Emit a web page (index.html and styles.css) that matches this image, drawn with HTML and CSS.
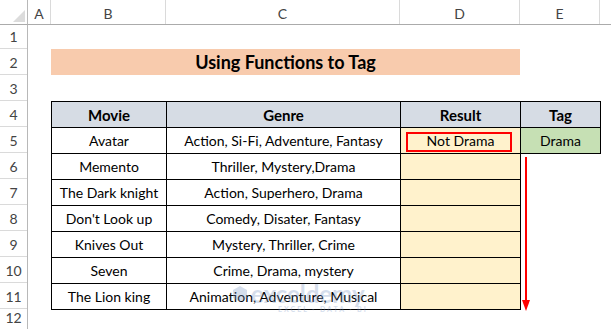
FILE: index.html
```html
<!DOCTYPE html>
<html>
<head>
<meta charset="utf-8">
<link rel="stylesheet" href="styles.css">
</head>
<body>
<div class="sheet">
  <div class="corner"><span class="tri"></span></div>
  <div class="colheads">
    <div class="ch w-a">A</div>
    <div class="ch w-b">B</div>
    <div class="ch w-c">C</div>
    <div class="ch w-d">D</div>
    <div class="ch w-e">E</div>
    <div class="ch w-f"></div>
  </div>
  <div class="rowheads">
    <div class="rh short">1</div>
    <div class="rh">2</div>
    <div class="rh">3</div>
    <div class="rh">4</div>
    <div class="rh">5</div>
    <div class="rh">6</div>
    <div class="rh">7</div>
    <div class="rh">8</div>
    <div class="rh">9</div>
    <div class="rh">10</div>
    <div class="rh">11</div>
    <div class="rh last">12</div>
  </div>
  <div class="content">
    <div class="title">Using Functions to Tag</div>
    <table class="data">
      <colgroup>
        <col class="c-b"><col class="c-c"><col class="c-d"><col class="c-e">
      </colgroup>
      <tr class="head">
        <td class="b">Movie</td><td class="b">Genre</td><td class="b">Result</td><td class="b">Tag</td>
      </tr>
      <tr>
        <td class="b">Avatar</td><td class="b">Action, Si-Fi, Adventure, Fantasy</td>
        <td class="b res"><span class="mark"></span>Not Drama</td><td class="b tag">Drama</td>
      </tr>
      <tr><td class="b">Memento</td><td class="b">Thriller, Mystery,Drama</td><td class="b res"></td><td></td></tr>
      <tr><td class="b">The Dark knight</td><td class="b">Action, Superhero, Drama</td><td class="b res"></td><td></td></tr>
      <tr><td class="b">Don't Look up</td><td class="b">Comedy, Disater, Fantasy</td><td class="b res"></td><td></td></tr>
      <tr><td class="b">Knives Out</td><td class="b">Mystery, Thriller, Crime</td><td class="b res"></td><td></td></tr>
      <tr><td class="b">Seven</td><td class="b">Crime, Drama, mystery</td><td class="b res"></td><td></td></tr>
      <tr><td class="b">The Lion king</td><td class="b">Animation, Adventure, Musical</td><td class="b res"></td><td></td></tr>
    </table>
  </div>
  <svg class="arrow" width="12" height="156" viewBox="0 0 12 156">
    <line x1="6" y1="0" x2="6" y2="146" stroke="#ff0000" stroke-width="2"/>
    <polygon points="2,143 10,143 6,154" fill="#ff0000"/>
  </svg>
  <div class="watermark">
    <div class="wm-row">
      <svg class="wm-logo" width="16" height="18" viewBox="0 0 16 18">
        <path d="M8 1 L15 5 L15 13 L8 17 L1 13 L1 5 Z" fill="#7f9cc7"/>
      </svg>
      <span class="wm-text">exceldemy</span>
    </div>
    <div class="wm-sub">EXCEL · DATA · BI</div>
  </div>
</div>
</body>
</html>
```

FILE: styles.css
```css
* { box-sizing: border-box; }
html, body { margin: 0; padding: 0; background: #ffffff; }
body { font-family: Lato, "Liberation Sans", sans-serif; color: #000; }

.sheet {
  position: relative;
  width: 611px;
  height: 329px;
  overflow: hidden;
  display: grid;
  grid-template-columns: 28px 1fr;
  grid-template-rows: 25px 1fr;
}

.corner {
  position: relative;
  border-right: 1px solid #b8b8b8;
  border-bottom: 1px solid #ababab;
}
.tri {
  position: absolute;
  left: 13px;
  top: 10px;
  width: 0;
  height: 0;
  border-left: 12px solid transparent;
  border-bottom: 12px solid #dcdcdc;
}

.colheads {
  display: flex;
  border-bottom: 1px solid #ababab;
}
.ch {
  display: flex;
  align-items: center;
  justify-content: center;
  border-right: 1px solid #dadada;
  font-size: 14px;
  color: #444;
  padding-top: 2px;
}
.w-a { width: 23px; }
.w-b { width: 115px; }
.w-c { width: 234px; }
.w-d { width: 120px; }
.w-e { width: 80px; }
.w-f { flex: 1; border-right: none; }

.rowheads {
  display: flex;
  flex-direction: column;
  border-right: 1px solid #b8b8b8;
}
.rh {
  height: 26px;
  flex: none;
  display: flex;
  align-items: flex-end;
  justify-content: center;
  padding-bottom: 3px;
  border-bottom: 1px solid #dadada;
  font-size: 14px;
  color: #444;
}
.rh.short { height: 24px; }
.rh.last { flex: 1; border-bottom: none; }

.content {
  padding: 24px 0 0 23px;
}
.title {
  width: 469px;
  height: 26px;
  background: #f8cbad;
  display: flex;
  align-items: center;
  justify-content: center;
  font-weight: 700;
  font-size: 18px;
  margin-bottom: 26px;
}

.data {
  border-collapse: collapse;
  table-layout: fixed;
  width: 549px;
  font-size: 14px;
}
.c-b { width: 115px; }
.c-c { width: 234px; }
.c-d { width: 120px; }
.c-e { width: 80px; }
.data td {
  height: 26px;
  padding: 0;
  text-align: center;
  vertical-align: middle;
  white-space: nowrap;
}
.data td.b { border: 1px solid #000; }
.head td {
  background: #d6dce4;
  font-weight: 700;
  font-size: 15px;
}
.res {
  position: relative;
  background: #fff2cc;
}
.tag { background: #c6e0b4; }
.mark {
  position: absolute;
  left: 5px;
  top: 4px;
  width: 106px;
  height: 20px;
  border: 2px solid #ff0000;
}

.arrow {
  position: absolute;
  left: 520px;
  top: 157px;
}

.watermark {
  position: absolute;
  left: 232px;
  top: 283px;
  opacity: 0.32;
  color: #7f9cc7;
}
.wm-row {
  display: flex;
  align-items: center;
  gap: 3px;
}
.wm-text {
  font-family: Lato, sans-serif;
  font-weight: 700;
  font-size: 24px;
  line-height: 22px;
}
.wm-sub {
  margin-left: 46px;
  font-size: 7px;
  letter-spacing: 2px;
  font-weight: 700;
}
```
